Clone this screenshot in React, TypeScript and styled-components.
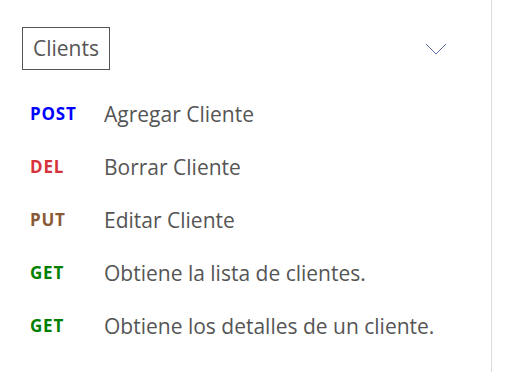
import styled, { createGlobalStyle } from "styled-components";

const GlobalStyle = createGlobalStyle`
  html, body {
    margin: 0;
    padding: 0;
    background: #fff;
    font-family: "Open Sans", "Noto Sans", sans-serif;
  }
`;

const Panel = styled.div`
  width: 492px;
  height: 372px;
  box-sizing: border-box;
  border-right: 1px solid #dcdcdc;
  padding: 27px 0 0 22px;
`;

const Header = styled.div`
  display: flex;
  align-items: center;
  justify-content: space-between;
  padding-right: 44px;
`;

const GroupTitle = styled.div`
  border: 1px solid #555;
  padding: 0 10px;
  height: 41px;
  line-height: 40px;
  font-size: 21px;
  color: #555;
`;

const List = styled.ul`
  list-style: none;
  margin: 17px 0 0;
  padding: 0;
`;

const Row = styled.li`
  display: grid;
  grid-template-columns: 74px 1fr;
  align-items: center;
  height: 53px;
  padding-left: 8px;
`;

const methodColors: Record<string, string> = {
  POST: "#0000ff",
  DEL: "#d6323a",
  PUT: "#8a5a36",
  GET: "#008000",
};

const Method = styled.span<{ $method: string }>`
  font-weight: bold;
  font-size: 17px;
  letter-spacing: 0.8px;
  color: ${(p) => methodColors[p.$method]};
`;

const Summary = styled.span`
  font-size: 21px;
  color: #555;
`;

const Chevron = () => (
  <svg width="22" height="12" viewBox="0 0 22 12">
    <polyline
      points="1,1 11,11 21,1"
      fill="none"
      stroke="#5b6b9c"
      strokeWidth="1"
    />
  </svg>
);

const endpoints = [
  { method: "POST", text: "Agregar Cliente" },
  { method: "DEL", text: "Borrar Cliente" },
  { method: "PUT", text: "Editar Cliente" },
  { method: "GET", text: "Obtiene la lista de clientes." },
  { method: "GET", text: "Obtiene los detalles de un cliente." },
];

export default function App() {
  return (
    <>
      <GlobalStyle />
      <Panel>
        <Header>
          <GroupTitle>Clients</GroupTitle>
          <Chevron />
        </Header>
        <List>
          {endpoints.map((e, i) => (
            <Row key={i}>
              <Method $method={e.method}>{e.method}</Method>
              <Summary>{e.text}</Summary>
            </Row>
          ))}
        </List>
      </Panel>
    </>
  );
}
